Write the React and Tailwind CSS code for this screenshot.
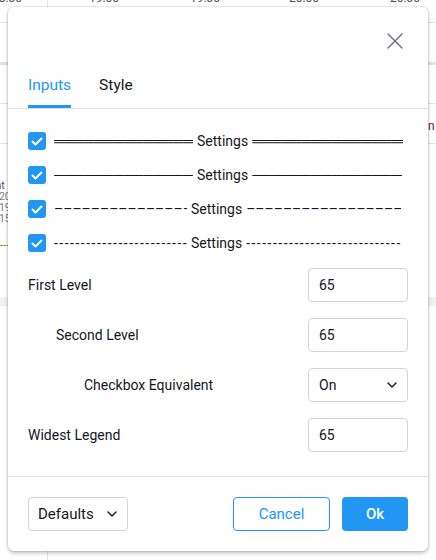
import React from 'react';

const Check = () => (
    <svg width="18" height="18" viewBox="0 0 18 18" className="block">
        <path d="M4.5 9.5L7.5 12.5L13.5 6.5" fill="none" stroke="#fff" strokeWidth="2" strokeLinecap="round" strokeLinejoin="round" />
    </svg>
);

const Chevron = () => (
    <svg width="10" height="6" viewBox="0 0 10 6" className="block">
        <path d="M1 1l4 4 4-4" fill="none" stroke="#131722" strokeWidth="1.4" strokeLinecap="round" strokeLinejoin="round" />
    </svg>
);

const ChartBackdrop = () => (
    <div className="absolute inset-0">
        <div className="absolute left-0 right-0 top-[22px] h-px bg-[#e0e3eb]"></div>
        <div className="absolute left-0 right-0 top-[62px] h-[3px] bg-[#dfe1e8]"></div>
        <div className="absolute left-0 right-0 top-[103px] h-px bg-[#e0e3eb]"></div>
        <div className="absolute left-0 right-0 top-[143px] h-px bg-[#e0e3eb]"></div>
        <div className="absolute left-0 right-0 top-[297px] h-[9px] bg-[#f0f1f4]"></div>
        <div className="absolute left-[47px] top-0 bottom-0 w-px bg-[#e0e3eb]"></div>
        <div className="absolute left-0 top-[245px] w-[10px] border-t border-dashed border-[#9a8a2a]"></div>
        <div className="absolute -top-[8px] left-0 right-0 text-[12px] leading-[12px] text-[#50535e]">
            <span className="absolute -left-[8px]">18:30</span>
            <span className="absolute left-[89px]">19:00</span>
            <span className="absolute left-[190px]">19:30</span>
            <span className="absolute left-[289px]">20:00</span>
            <span className="absolute left-[390px]">20:30</span>
        </div>
        <div className="absolute -left-[7px] top-[180px] text-[10.5px] leading-[11px] text-[#787b86]">
            <div className="text-[#50535e]">int</div>
            <div>120</div>
            <div>119</div>
            <div>115</div>
        </div>
        <div className="absolute left-[428px] top-[117px] text-[12px] text-[#880e4f]">n</div>
    </div>
);

// the divider strings are clipped to the widths they take in the dialog
const SettingsLine = ({ line, left, right, cls }) => (
    <div className="flex items-center whitespace-nowrap text-[14px] text-[#131722]">
        <span className={`overflow-hidden ${cls}`} style={{ width: left[1] }}>{line.repeat(left[0])}</span>
        <span className="px-[4px]">Settings</span>
        <span className={`overflow-hidden ${cls}`} style={{ width: right[1] }}>{line.repeat(right[0])}</span>
    </div>
);

const checkRows = [
    { line: '═', left: [15, 139], right: [16, 151], cls: 'font-bold' },
    { line: '─', left: [15, 139], right: [16, 150], cls: '' },
    { line: '–', left: [15, 133], right: [17, 155], cls: '' },
    { line: '-', left: [26, 133], right: [30, 155], cls: 'tracking-[1.5px]' },
];

const FieldBox = ({ children }) => (
    <div className="w-[100px] h-[34px] border border-[#d1d4dc] rounded-[4px] flex items-center justify-between pl-[10px] pr-[10px] text-[14px] text-[#131722]">
        {children}
    </div>
);

const fields = [
    { label: 'First Level', indent: 'pl-0', value: '65' },
    { label: 'Second Level', indent: 'pl-[28px]', value: '65' },
    { label: 'Checkbox Equivalent', indent: 'pl-[56px]', value: 'On', select: true },
    { label: 'Widest Legend', indent: 'pl-0', value: '65' },
];

const App = () => {
    return (
        <div className="relative w-[436px] h-[560px] overflow-hidden bg-white font-['Roboto',sans-serif]">
            <ChartBackdrop />
            <div className="absolute left-2 top-[7px] w-[420px] h-[544px] bg-white rounded-[6px] shadow-[0_0_0_1px_rgba(0,0,0,0.06),0_2px_4px_rgba(0,0,0,0.25)] flex flex-col">
                <div className="h-[68px] flex justify-end items-start pt-[26px] pr-[25px]">
                    <svg width="16" height="16" viewBox="0 0 16 16" className="block">
                        <path d="M1 1L15 15M15 1L1 15" stroke="#6a6d78" strokeWidth="1.4" strokeLinecap="round" />
                    </svg>
                </div>
                <div className="flex gap-[28px] px-5 text-[15.5px] leading-[20px]">
                    <div className="pb-[10px] border-b-[3px] border-[#2196f3] text-[#2196f3]">Inputs</div>
                    <div className="pb-[10px] border-b-[3px] border-transparent text-[#131722]">Style</div>
                </div>
                <div className="border-t border-[#e0e3eb]"></div>
                <div className="flex-1 px-5 pt-[15px]">
                    {checkRows.map((r, i) => (
                        <div key={i} className="h-[34px] flex items-center gap-2">
                            <div className="w-[18px] h-[18px] rounded-[3px] bg-[#2196f3]">
                                <Check />
                            </div>
                            <SettingsLine {...r} />
                        </div>
                    ))}
                    <div className="mt-2 flex flex-col gap-4">
                        {fields.map((f) => (
                            <div key={f.label} className="flex items-center justify-between">
                                <span className={`text-[14px] text-[#131722] ${f.indent}`}>{f.label}</span>
                                <FieldBox>
                                    <span>{f.value}</span>
                                    {f.select && <Chevron />}
                                </FieldBox>
                            </div>
                        ))}
                    </div>
                </div>
                <div className="border-t border-[#e0e3eb]"></div>
                <div className="flex items-center justify-between px-5 py-5">
                    <div className="w-[100px] h-[34px] border border-[#d1d4dc] rounded-[4px] flex items-center justify-between pl-[9px] pr-[10px] text-[15px] text-[#131722]">
                        <span>Defaults</span>
                        <Chevron />
                    </div>
                    <div className="flex gap-3">
                        <button className="w-[97px] h-[34px] border border-[#2196f3] rounded-[4px] text-[15px] text-[#2196f3]">Cancel</button>
                        <button className="w-[66px] h-[34px] bg-[#2196f3] rounded-[4px] text-[15px] font-medium text-white">Ok</button>
                    </div>
                </div>
            </div>
        </div>
    );
};

export default App;
